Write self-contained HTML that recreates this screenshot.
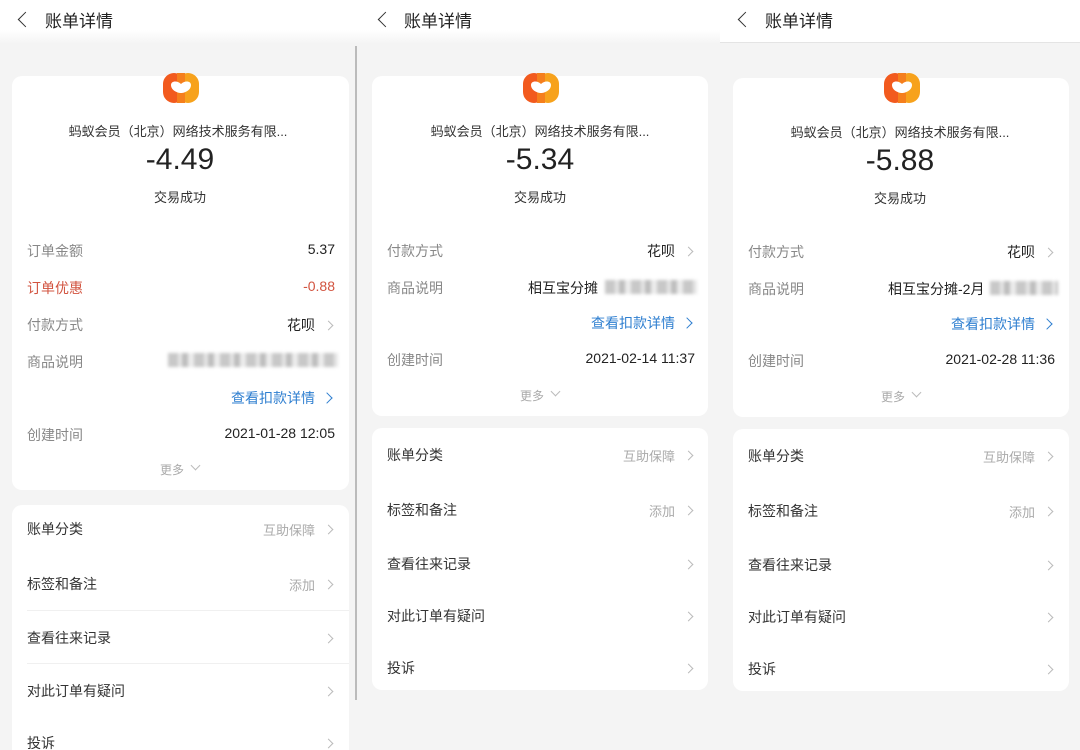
<!DOCTYPE html>
<html><head><meta charset="utf-8"><style>
*{margin:0;padding:0;box-sizing:border-box}
body{width:1080px;height:750px;overflow:hidden;background:#f4f4f4;font-family:"Liberation Sans","Noto Sans CJK SC",sans-serif;position:relative;color:#333}
.p{position:absolute;top:0;height:750px;width:360px;overflow:hidden}
.hd{position:absolute;left:0;top:0;width:360px;height:44px;background:linear-gradient(#fff,#fff 30px,#f4f4f4)}
.t{position:absolute;font-size:17px;color:#222;top:7px}
.bk{position:absolute;top:14px;width:11px;height:11px;border-left:1.8px solid #333;border-bottom:1.8px solid #333;transform:rotate(45deg)}
.card{position:absolute;background:#fff;border-radius:10px}
.a{position:absolute;white-space:nowrap}
.l{font-size:14px;color:#888}
.v{font-size:14px;color:#222;text-align:right}
.c{position:absolute;width:7px;height:7px;border-top:1.3px solid #bbb;border-right:1.3px solid #bbb;transform:rotate(45deg)}
.blur{position:absolute;height:14px;background:repeating-linear-gradient(90deg,#c8c8c8 0 10px,#e6e6e6 10px 14px,#bdbdbd 14px 20px,#ececec 20px 26px);filter:blur(1.5px)}
.logo{position:absolute;width:38px;height:32px}
.ctr{position:absolute;left:0;width:360px;text-align:center;white-space:nowrap}
</style></head><body>

<!-- Panel 1 -->
<div class="p" style="left:0">
<div class="hd"></div>
<div class="bk" style="left:20px"></div>
<div class="t" style="left:45px">账单详情</div>
<div style="position:absolute;left:355px;top:46px;width:2px;height:654px;background:#bbb"></div>
<div class="card" style="left:12px;top:76px;width:337px;height:414px"></div>
<svg class="logo" style="left:162px;top:72px" viewBox="0 0 38 32"><rect x="1" y="1" width="22" height="30" rx="11" fill="#f25a1e"/><rect x="15" y="1" width="22" height="30" rx="11" fill="#f7a21c"/><rect x="15" y="1" width="8" height="30" fill="#f57f1d"/><path d="M9 13c0-4 6-5 10-1 4-4 10-3 10 1 0 5-6 8-10 8S9 18 9 13z" fill="#fff"/></svg>
<div class="ctr" style="top:121px;font-size:13px;color:#333;width:356px">蚂蚁会员（北京）网络技术服务有限...</div>
<div class="ctr" style="top:143px;font-size:30px;color:#222;width:360px">-4.49</div>
<div class="ctr" style="top:187px;font-size:13px;color:#333">交易成功</div>
<div class="a l" style="left:27px;top:241px">订单金额</div><div class="a v" style="right:25px;top:241px">5.37</div>
<div class="a l" style="left:27px;top:278px;color:#d2533f">订单优惠</div><div class="a v" style="right:25px;top:278px;color:#d2533f">-0.88</div>
<div class="a l" style="left:27px;top:315px">付款方式</div><div class="a v" style="right:45px;top:315px">花呗</div><div class="c" style="left:325px;top:322px"></div>
<div class="a l" style="left:27px;top:352px">商品说明</div><div class="blur" style="left:168px;top:353px;width:170px"></div>
<div class="a" style="right:45px;top:388px;font-size:14px;color:#2f7fd0">查看扣款详情</div><div class="c" style="left:323px;top:394px;border-color:#2f7fd0;width:8px;height:8px"></div>
<div class="a l" style="left:27px;top:425px">创建时间</div><div class="a v" style="right:25px;top:425px">2021-01-28 12:05</div>
<div class="a" style="left:160px;top:461px;font-size:12px;color:#aaa">更多</div><div class="c" style="left:192px;top:462px;transform:rotate(135deg)"></div>
<div class="card" style="left:12px;top:505px;width:337px;height:260px"></div>
<div class="a" style="left:27px;top:519px;font-size:14px">账单分类</div><div class="a" style="right:45px;top:520px;font-size:13px;color:#aaa">互助保障</div><div class="c" style="left:325px;top:526px"></div>
<div class="a" style="left:27px;top:574px;font-size:14px">标签和备注</div><div class="a" style="right:45px;top:575px;font-size:13px;color:#aaa">添加</div><div class="c" style="left:325px;top:581px"></div>
<div style="position:absolute;left:27px;top:610px;width:322px;height:1px;background:#f0f0f0"></div>
<div class="a" style="left:27px;top:628px;font-size:14px">查看往来记录</div><div class="c" style="left:325px;top:635px"></div>
<div style="position:absolute;left:27px;top:663px;width:322px;height:1px;background:#f0f0f0"></div>
<div class="a" style="left:27px;top:681px;font-size:14px">对此订单有疑问</div><div class="c" style="left:325px;top:688px"></div>
<div class="a" style="left:27px;top:733px;font-size:14px">投诉</div><div class="c" style="left:325px;top:740px"></div>
</div>

<!-- Panel 2 -->
<div class="p" style="left:360px">
<div class="hd"></div>
<div class="bk" style="left:20px"></div>
<div class="t" style="left:44px">账单详情</div>
<div class="card" style="left:12px;top:76px;width:336px;height:340px"></div>
<svg class="logo" style="left:162px;top:72px" viewBox="0 0 38 32"><rect x="1" y="1" width="22" height="30" rx="11" fill="#f25a1e"/><rect x="15" y="1" width="22" height="30" rx="11" fill="#f7a21c"/><rect x="15" y="1" width="8" height="30" fill="#f57f1d"/><path d="M9 13c0-4 6-5 10-1 4-4 10-3 10 1 0 5-6 8-10 8S9 18 9 13z" fill="#fff"/></svg>
<div class="ctr" style="top:121px;font-size:13px;color:#333">蚂蚁会员（北京）网络技术服务有限...</div>
<div class="ctr" style="top:143px;font-size:30px;color:#222">-5.34</div>
<div class="ctr" style="top:187px;font-size:13px;color:#333">交易成功</div>
<div class="a l" style="left:27px;top:241px">付款方式</div><div class="a v" style="right:45px;top:241px">花呗</div><div class="c" style="left:325px;top:248px"></div>
<div class="a l" style="left:27px;top:278px">商品说明</div><div class="a v" style="left:168px;top:278px">相互宝分摊</div><div class="blur" style="left:245px;top:280px;width:92px"></div>
<div class="a" style="right:45px;top:313px;font-size:14px;color:#2f7fd0">查看扣款详情</div><div class="c" style="left:323px;top:319px;border-color:#2f7fd0;width:8px;height:8px"></div>
<div class="a l" style="left:27px;top:350px">创建时间</div><div class="a v" style="right:25px;top:350px">2021-02-14 11:37</div>
<div class="a" style="left:160px;top:387px;font-size:12px;color:#aaa">更多</div><div class="c" style="left:192px;top:388px;transform:rotate(135deg)"></div>
<div class="card" style="left:12px;top:428px;width:336px;height:262px"></div>
<div class="a" style="left:27px;top:445px;font-size:14px">账单分类</div><div class="a" style="right:45px;top:446px;font-size:13px;color:#aaa">互助保障</div><div class="c" style="left:325px;top:452px"></div>
<div class="a" style="left:27px;top:500px;font-size:14px">标签和备注</div><div class="a" style="right:45px;top:501px;font-size:13px;color:#aaa">添加</div><div class="c" style="left:325px;top:507px"></div>
<div class="a" style="left:27px;top:554px;font-size:14px">查看往来记录</div><div class="c" style="left:325px;top:561px"></div>
<div class="a" style="left:27px;top:606px;font-size:14px">对此订单有疑问</div><div class="c" style="left:325px;top:613px"></div>
<div class="a" style="left:27px;top:658px;font-size:14px">投诉</div><div class="c" style="left:325px;top:665px"></div>
</div>

<!-- Panel 3 -->
<div class="p" style="left:720px">
<div class="hd" style="background:#fff;height:43px;border-bottom:1px solid #e4e4e4"></div>
<div class="bk" style="left:20px"></div>
<div class="t" style="left:45px">账单详情</div>
<div class="card" style="left:13px;top:78px;width:336px;height:339px"></div>
<svg class="logo" style="left:163px;top:72px" viewBox="0 0 38 32"><rect x="1" y="1" width="22" height="30" rx="11" fill="#f25a1e"/><rect x="15" y="1" width="22" height="30" rx="11" fill="#f7a21c"/><rect x="15" y="1" width="8" height="30" fill="#f57f1d"/><path d="M9 13c0-4 6-5 10-1 4-4 10-3 10 1 0 5-6 8-10 8S9 18 9 13z" fill="#fff"/></svg>
<div class="ctr" style="top:122px;font-size:13px;color:#333">蚂蚁会员（北京）网络技术服务有限...</div>
<div class="ctr" style="top:144px;font-size:30px;color:#222">-5.88</div>
<div class="ctr" style="top:188px;font-size:13px;color:#333">交易成功</div>
<div class="a l" style="left:28px;top:242px">付款方式</div><div class="a v" style="right:45px;top:242px">花呗</div><div class="c" style="left:325px;top:249px"></div>
<div class="a l" style="left:28px;top:279px">商品说明</div><div class="a v" style="left:168px;top:279px">相互宝分摊-2月</div><div class="blur" style="left:270px;top:281px;width:68px"></div>
<div class="a" style="right:45px;top:314px;font-size:14px;color:#2f7fd0">查看扣款详情</div><div class="c" style="left:323px;top:320px;border-color:#2f7fd0;width:8px;height:8px"></div>
<div class="a l" style="left:28px;top:351px">创建时间</div><div class="a v" style="right:25px;top:351px">2021-02-28 11:36</div>
<div class="a" style="left:161px;top:388px;font-size:12px;color:#aaa">更多</div><div class="c" style="left:193px;top:389px;transform:rotate(135deg)"></div>
<div class="card" style="left:13px;top:429px;width:336px;height:262px"></div>
<div class="a" style="left:28px;top:446px;font-size:14px">账单分类</div><div class="a" style="right:45px;top:447px;font-size:13px;color:#aaa">互助保障</div><div class="c" style="left:325px;top:453px"></div>
<div class="a" style="left:28px;top:501px;font-size:14px">标签和备注</div><div class="a" style="right:45px;top:502px;font-size:13px;color:#aaa">添加</div><div class="c" style="left:325px;top:508px"></div>
<div class="a" style="left:28px;top:555px;font-size:14px">查看往来记录</div><div class="c" style="left:325px;top:562px"></div>
<div class="a" style="left:28px;top:607px;font-size:14px">对此订单有疑问</div><div class="c" style="left:325px;top:614px"></div>
<div class="a" style="left:28px;top:659px;font-size:14px">投诉</div><div class="c" style="left:325px;top:666px"></div>
</div>
</body></html>
